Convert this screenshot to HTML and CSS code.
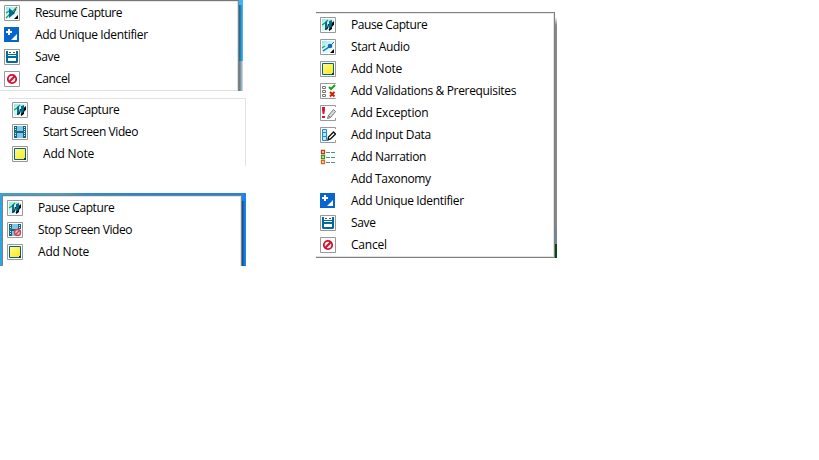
FILE: index.html
```
<!DOCTYPE html>
<html lang="en">
<head>
<meta charset="utf-8">
<title>Capture menus</title>
<link rel="stylesheet" href="styles.css">
</head>
<body>
<svg class="defs" width="0" height="0">
  <defs>
    <linearGradient id="sky" x1="0" y1="0" x2="1" y2="1"><stop offset="0" stop-color="#8fe8f4"/><stop offset=".5" stop-color="#d5f6f5"/><stop offset="1" stop-color="#fff"/></linearGradient>
    <linearGradient id="sun" x1="0" y1="0" x2="1" y2="1"><stop offset="0" stop-color="#fff8a0"/><stop offset=".4" stop-color="#fff45a"/><stop offset="1" stop-color="#ffe81a"/></linearGradient>
    <symbol id="frame" viewBox="0 0 16 16"><path fill="#fff" stroke="#999" d="M.5.5h15v15H.5z"/></symbol>
    <symbol id="resume" viewBox="0 0 16 16">
      <use href="#frame"/><path fill="url(#sky)" d="M2 2h12v12H2z"/>
      <path stroke="#25a044" stroke-width="1.3" d="M2 8l3-2M2 13L13 2"/>
      <path fill="#006b93" d="M5 3l6 5-6 5z"/><path stroke="#16516c" stroke-width="1.2" d="M9 9l3-5"/>
      <path d="M14 10v4h-4z"/>
    </symbol>
    <symbol id="pause" viewBox="0 0 16 16">
      <use href="#frame"/><path fill="url(#sky)" d="M2 2h12v12H2z"/>
      <path fill="none" stroke="#279743" stroke-width="1.3" d="M2 8l3-2 3-3"/>
      <path fill="#00708f" d="M5 5l2-1v8l-2 1zM9 4l3-1v6l-3 3z"/>
      <path fill="none" stroke="#082c38" stroke-width="1.3" d="M5 12c2.500 1 3-2 3.500-5M9 13l2.500-3 2-5"/>
      <path d="M9 12l3-2v2l-3 2zM12 6l2-2v4l-2 1z"/>
    </symbol>
    <symbol id="ident" viewBox="0 0 16 16">
      <path fill="#0864ce" d="M0 0h15v15H0z"/><path fill="#fff" d="M4 2h2v2h2v2H6v2H4V6H2V4h2zM13 7v6H7z"/>
    </symbol>
    <symbol id="save" viewBox="0 0 16 16">
      <use href="#frame"/><path fill="#056b9b" d="M2 2h2v5h8V2h2v11l-1 1H3l-1-1z"/><path fill="#fff" d="M4 2h8v4H4zM4 9h8v3H4z"/><path fill="#056b9b" d="M5 3h2v1H5zM9 3h2v1H9zM4 5h8v1H4z"/>
    </symbol>
    <symbol id="cancel" viewBox="0 0 16 16">
      <use href="#frame"/><circle cx="8" cy="8" r="4.200" fill="#ffe9e9" stroke="#ce1231" stroke-width="1.800"/><path stroke="#ce1231" stroke-width="2" d="M5 11l6-6"/>
    </symbol>
    <symbol id="film" viewBox="0 0 16 16">
      <use href="#frame"/><path fill="#176386" d="M2 2h3v12H2zM11 2h3v12h-3z"/><path fill="#80c8e5" d="M5 2h6v12H5z"/><path fill="#156589" d="M5 7h6v2H5z"/>
      <path stroke="#d8f4f8" stroke-dasharray="1 1" d="M3.500 3v10M12.500 3v10"/><path stroke="#269548" d="M2 9l3-3"/>
    </symbol>
    <symbol id="stopfilm" viewBox="0 0 16 16">
      <use href="#film"/><path fill="#cfe6ee" d="M9 7h5v7H8z"/><circle cx="10.500" cy="10.500" r="3" fill="#e9c9d0" stroke="#cc4055" stroke-width="1.400"/><path stroke="#cc4055" stroke-width="1.300" d="M8.500 12.500l4-4"/>
    </symbol>
    <symbol id="note" viewBox="0 0 16 16">
      <use href="#frame"/><path fill="url(#sun)" stroke="#00638d" d="M2.500 2.500h11v11h-11z"/><path fill="#063c58" d="M12 12h2v2h-2z"/>
    </symbol>
    <symbol id="audio" viewBox="0 0 16 16">
      <use href="#frame"/><path fill="url(#sky)" d="M2 2h12v12H2z"/><path fill="none" stroke="#329661" stroke-width="1.100" d="M2 9l3-2"/><path stroke="#176e9e" stroke-width="1.500" d="M3 12l6-4"/><circle cx="10" cy="7" r="2.300" fill="#176baa"/><path stroke="#176baa" d="M11 6l3-3"/><path d="M14 10v4h-4z"/>
    </symbol>
    <symbol id="valid" viewBox="0 0 16 16">
      <path fill="#fff" stroke="#999" d="M15.500 1V.5H.5v15h15V15"/><path fill="#fff" stroke="#777" d="M2.500 3.500h3v2h-3zM2.500 7.500h3v2h-3zM2.500 11.500h3v2h-3z"/>
      <path fill="none" stroke="#16a516" stroke-width="2" d="M9 4l2 2 4-4"/><path stroke="#cf2205" stroke-width="2" d="M10 9l4.500 4.500M14.500 9L10 13.500"/>
    </symbol>
    <symbol id="exception" viewBox="0 0 16 16">
      <path fill="#fff" stroke="#999" d="M15.500 2V.5H.5v15h15V13"/><path fill="#e0142d" d="M2 2h3v3l-.7 4H2.700L2 5zM2 11h3v2H2z"/><path fill="#ddd" stroke="#777" d="M7.500 13.500l1-3 5-6 2 2-5 6z"/><path stroke="#777" d="M8.500 10.500l2 2"/>
    </symbol>
    <symbol id="input" viewBox="0 0 16 16">
      <path fill="#fff" stroke="#999" d="M15.500 2V.5H.5v15h15V13"/><path fill="#bce7ff" stroke="#158bda" d="M2.500 2.500h4v3h-4zM2.500 5.500h4v4h-4zM2.500 9.500h4v4h-4z"/><path fill="#fff" stroke="#111" stroke-width="1.400" d="M8 13l.5-3 5-5 2 2-5 5z"/>
    </symbol>
    <symbol id="narration" viewBox="0 0 16 16">
      <path fill="#fff" stroke="#c33a12" stroke-width="1.300" d="M1.500 1.500h3v3h-3z"/><path fill="#fff" stroke="#38961c" stroke-width="1.300" d="M1.500 6.500h3v3h-3z"/><path fill="#fff" stroke="#dd6812" stroke-width="1.300" d="M1.500 11.500h3v3h-3z"/><path stroke="#4b9688" d="M6 3.500h4m1 0h4M6 8.500h4m1 0h4M6 13.500h4m1 0h4"/>
    </symbol>
  </defs>
</svg>
<main class="page">
  <div class="column">
    <section class="stage stage-resume">
      <ul class="menu">
        <li><svg><use href="#resume"/></svg><span class="tight">Resume Capture</span></li>
        <li><svg><use href="#ident"/></svg><span>Add Unique Identifier</span></li>
        <li><svg><use href="#save"/></svg><span>Save</span></li>
        <li><svg><use href="#cancel"/></svg><span>Cancel</span></li>
      </ul>
      <div class="shadow"></div>
    </section>
    <section class="stage-video">
      <ul class="menu">
        <li><svg><use href="#pause"/></svg><span class="tight">Pause Capture</span></li>
        <li><svg><use href="#film"/></svg><span class="tight">Start Screen Video</span></li>
        <li><svg><use href="#note"/></svg><span class="loose">Add Note</span></li>
      </ul>
    </section>
    <section class="stage stage-stop">
      <ul class="menu">
        <li><svg><use href="#pause"/></svg><span class="tight">Pause Capture</span></li>
        <li><svg><use href="#stopfilm"/></svg><span class="tight">Stop Screen Video</span></li>
        <li><svg><use href="#note"/></svg><span class="loose">Add Note</span></li>
      </ul>
      <div class="shadow"></div>
    </section>
  </div>
  <section class="stage stage-full">
    <ul class="menu">
      <li><svg><use href="#pause"/></svg><span class="tight">Pause Capture</span></li>
      <li><svg><use href="#audio"/></svg><span>Start Audio</span></li>
      <li><svg><use href="#note"/></svg><span class="loose">Add Note</span></li>
      <li><svg><use href="#valid"/></svg><span>Add Validations &amp; Prerequisites</span></li>
      <li><svg><use href="#exception"/></svg><span class="loose">Add Exception</span></li>
      <li><svg><use href="#input"/></svg><span>Add Input Data</span></li>
      <li><svg><use href="#narration"/></svg><span>Add Narration</span></li>
      <li><svg></svg><span>Add Taxonomy</span></li>
      <li><svg><use href="#ident"/></svg><span>Add Unique Identifier</span></li>
      <li><svg><use href="#save"/></svg><span>Save</span></li>
      <li><svg><use href="#cancel"/></svg><span class="loose">Cancel</span></li>
    </ul>
    <div class="shadow"></div>
  </section>
</main>
</body>
</html>
```
FILE: styles.css
```
* { box-sizing: border-box; }
body { margin: 0; background: #fff; color: #000; font: 12px/22px "Open Sans", "Noto Sans", sans-serif; overflow: hidden; }
.defs { position: absolute; }
.page { display: flex; align-items: flex-start; height: 460px; }
.column { width: 316px; }
.menu { margin: 0; padding: 0; list-style: none; background: #fff; flex: none; }
.menu li { display: flex; align-items: center; height: 22px; }
.menu svg { width: 16px; height: 16px; margin-right: 15px; flex: none; }
.menu span { white-space: nowrap; letter-spacing: -0.34px; }
.menu .tight { letter-spacing: -0.42px; }
.menu .loose { letter-spacing: -0.2px; }
.stage { display: flex; }
.shadow { flex: 1; }

.stage-resume { width: 243px; height: 91px; background: linear-gradient(#38b6ff 0 61px, #b8d4e4 61px); }
.stage-resume .menu { width: 239px; padding: 1px 0 0 4px; border-top: 1px solid #777; border-right: 1px solid #808080; box-shadow: inset -1px -1px #e0e0e0, inset 0 1px #e8e8e8; }
.stage-resume .shadow { margin-top: 5px; background: linear-gradient(90deg, rgba(0,0,0,.45), rgba(0,0,0,.25) 50%, transparent 80%); }

.stage-video { width: 238px; height: 68px; margin: 7px 0 0 8px; border-top: 1px solid #e3e3e3; border-right: 1px solid #e3e3e3; }
.stage-video .menu { padding-left: 4px; }

.stage-stop { width: 246px; height: 73px; margin-top: 27px; padding: 2px 0 0 2px; background: linear-gradient(90deg, #2ba6e2, #4a9cc8 25%, #2490dc 34%, #1886ee 60%); }
.stage-stop .menu { width: 240px; padding: 1px 0 0 4px; border: solid #808080; border-width: 1px 1px 0; box-shadow: inset -1px 1px #e3e3e3; }
.stage-stop .shadow { margin-top: 6px; background: linear-gradient(90deg, rgba(0,0,0,.45), transparent 75%); }

.stage-full { width: 241px; height: 246px; margin-top: 12px; }
.stage-full .menu { width: 239px; padding: 1px 0 0 4px; border: solid #808080; border-width: 1px 1px 1px 0; box-shadow: inset -1px -1px #e3e3e3, inset 0 1px #e8e8e8; }
.stage-full .shadow { margin-top: 5px; background: linear-gradient(transparent, #888 8px 210px, #71889a 210px 227px, #064b0b 227px); }
```
